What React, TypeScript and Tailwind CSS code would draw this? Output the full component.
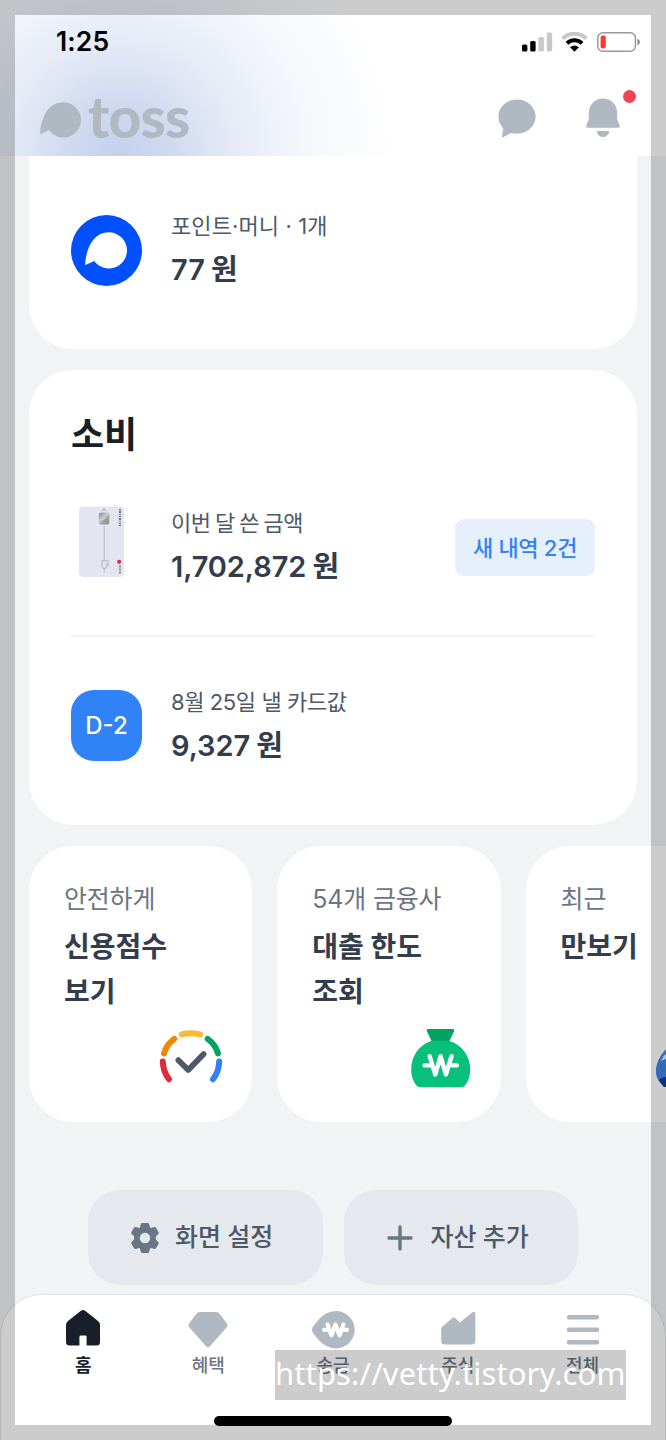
import type { ReactNode } from "react"

const TossMark = ({ className }: { className?: string }) => (
  <svg viewBox="0 0 41 36" className={className} fill="currentColor">
    <path d="M23.3 0.2 A17.7 17.7 0 0 1 41 17.9 A17.7 17.7 0 0 1 9 28.300 L1 32 Q0 32.400 0.1 31.200 C1.5 14 9 0.2 23.3 0.2 Z" />
  </svg>
)

const SignalIcon = () => (
  <svg width="31" height="20" viewBox="0 0 31 20">
    <rect x="0" y="12.5" width="5.4" height="7" rx="1.5" fill="#000" />
    <rect x="8.2" y="9" width="5.4" height="10.5" rx="1.5" fill="#000" />
    <rect x="16.5" y="5" width="5.4" height="14.5" rx="1.5" fill="#c8c8c8" />
    <rect x="24.8" y="0.5" width="5.4" height="19" rx="1.5" fill="#c8c8c8" />
  </svg>
)

const WifiIcon = () => (
  <svg width="27" height="20" viewBox="0 0 27 20" fill="none">
    <path d="M1.6 6.6 A17 17 0 0 1 25.4 6.6" stroke="#c8c8c8" strokeWidth="4" />
    <path d="M6 11.4 A10.8 10.8 0 0 1 21 11.4" stroke="#000" strokeWidth="4" />
    <path d="M9 15.3 Q13.5 11.6 18 15.3 L13.5 19.8 Z" fill="#000" />
  </svg>
)

const BatteryIcon = () => (
  <svg width="44" height="20" viewBox="0 0 44 20">
    <rect x="0.8" y="0.8" width="37.6" height="18.4" rx="5" fill="none" stroke="#9a9a9a" strokeWidth="1.5" />
    <rect x="3.6" y="3.5" width="5.2" height="13" rx="2" fill="#fb3b30" />
    <path d="M40.4 6.8 Q43 7.8 43 10 Q43 12.2 40.4 13.2 Z" fill="#8f8f8f" />
  </svg>
)

const ChatIcon = () => (
  <svg width="38" height="39" viewBox="0 0 38 39" fill="#b0b8c1">
    <path d="M19 0.6 C29.3 0.6 37.6 8.3 37.6 17.6 C37.6 27 29.5 34.7 19 34.7 C17 34.7 15.2 34.3 13.4 33.9 L5 38.2 Q3.8 38.7 4 37.5 L5.3 29.4 C2.2 26.4 0.4 22.3 0.4 17.6 C0.4 8.3 8.7 0.6 19 0.6 Z" />
  </svg>
)

const BellIcon = () => (
  <svg width="34" height="40" viewBox="0 0 34 40" fill="#b0b8c1">
    <path d="M17 0.6 C25.2 0.6 31.2 6.8 31.2 15 V21.5 L33.7 27.4 Q34.3 29.8 32 29.8 H2 Q-0.3 29.8 0.3 27.4 L2.8 21.5 V15 C2.8 6.8 8.8 0.6 17 0.6 Z" />
    <path d="M11.8 33 H22.2 Q23.6 33 23.2 34.2 C22.2 37.2 20 39 17 39 C14 39 11.8 37.2 10.8 34.2 Q10.4 33 11.8 33 Z" />
  </svg>
)

const PlasticCard = () => (
  <svg width="71" height="71" viewBox="0 0 71 71">
    <defs>
      <linearGradient id="chip" x1="0" y1="0" x2="1" y2="1">
        <stop offset="0" stopColor="#8d8d8d" />
        <stop offset="0.45" stopColor="#c9c9c9" />
        <stop offset="0.55" stopColor="#a5a5a5" />
        <stop offset="1" stopColor="#8a8a8a" />
      </linearGradient>
    </defs>
    <rect x="8" y="0.5" width="45" height="70.5" rx="4.5" fill="#e5e5f1" />
    <path d="M31.3 4.6 L33 3.2 L34.7 4.6" fill="none" stroke="#777" strokeWidth="0.8" />
    <rect x="27.8" y="6.5" width="10.5" height="12" rx="2.2" fill="url(#chip)" />
    <path d="M28.5 14 L33.5 12.5 L38 8.5" fill="none" stroke="#e0e0e0" strokeWidth="0.8" />
    <path d="M33.2 20 V54.5 M33.2 62.5 V67" stroke="#b9b9c4" strokeWidth="1" />
    <path d="M31 54.8 H37 V60 L35 60.5 L34.5 62.5 H32.3 L31 60.5 Z M34.3 58 L37 59.5" fill="none" stroke="#b2b2bf" strokeWidth="1" />
    <path d="M49 3 V20" stroke="#77757f" strokeWidth="2.2" strokeDasharray="1.2 0.9 2.2 0.7 0.8 1" />
    <circle cx="48.2" cy="55.8" r="2.1" fill="#d92c50" />
    <path d="M49 59.5 V67.5" stroke="#8a8590" strokeWidth="1.9" strokeDasharray="1.4 0.6 0.9 0.5" />
  </svg>
)

const GaugeIcon = () => (
  <svg width="64" height="64" viewBox="0 0 64 64" fill="none" strokeWidth="6" strokeLinecap="round">
    <path d="M3.8 34.6 Q4.2 45 10 52.2" stroke="#de2a3c" />
    <path d="M5 26.4 Q7.4 17.600 15.3 11.800" stroke="#f18600" />
    <path d="M22.8 7.400 Q32 5 41 7.400" stroke="#f8bb36" />
    <path d="M48.7 11.800 Q56.6 17.600 59 26.400" stroke="#03a45f" />
    <path d="M60.2 34.600 Q59.8 45 54 52.200" stroke="#3182f6" />
    <path d="M19.4 33.2 L29.2 42.9 L44.5 27.2" stroke="#4e5968" strokeWidth="5.8" strokeLinejoin="round" />
  </svg>
)

const MoneyBagIcon = () => (
  <svg width="64" height="64" viewBox="0 0 64 64">
    <path d="M20.5 2 H44.4 Q47 2 45.9 4.4 L41 15 H24 L19 4.4 Q17.8 2 20.5 2 Z" fill="#02a262" />
    <path d="M24 13.8 H41 C54 17.5 62.2 29 62.2 42.5 C62.2 49 60.3 54.7 57 58.5 Q55.5 60.3 53 60.3 H12.4 Q9.9 60.3 8.4 58.5 C5.1 54.7 3.2 49 3.2 42.5 C3.2 29 11 17.5 24 13.8 Z" fill="#06c07c" />
    <path d="M21.6 29.2 L27.3 47.5 L32.6 29.2 L37.9 47.5 L43.6 29.2 M16.6 38.4 H23 M42.5 38.4 H48.8" fill="none" stroke="#fff" strokeWidth="4.4" strokeLinecap="round" strokeLinejoin="round" />
  </svg>
)

const WalkIcon = () => (
  <svg width="64" height="64" viewBox="0 0 64 64">
    <path d="M8 60 C2 54 -1 49 0 42 C1 35 4 28 12 20 H60 V60 Z" fill="#3f86e8" />
    <path d="M5 34 L14 30 V24.500 L8 28.500 Z" fill="#e6f0fd" />
    <path d="M2.500 53 Q7 50 15 48.500 V60 H8 Z" fill="#123f96" />
  </svg>
)

const GearIcon = () => (
  <svg width="30" height="32" viewBox="0 0 30 32">
    <path
      d="M12.3 1 H17.7 Q18.8 1 19.1 2.1 L20 5.4 L21 6 L24.3 5.1 Q25.4 4.8 26 5.8 L28.6 10.3 Q29.1 11.3 28.3 12.1 L25.9 14.5 V17.5 L28.3 19.9 Q29.1 20.7 28.6 21.7 L26 26.2 Q25.4 27.2 24.3 26.9 L21 26 L20 26.6 L19.1 29.9 Q18.8 31 17.7 31 H12.3 Q11.2 31 10.9 29.9 L10 26.6 L9 26 L5.7 26.9 Q4.6 27.2 4 26.2 L1.4 21.7 Q0.9 20.7 1.7 19.9 L4.1 17.5 V14.5 L1.7 12.1 Q0.9 11.3 1.4 10.3 L4 5.8 Q4.6 4.8 5.7 5.1 L9 6 L10 5.4 L10.9 2.1 Q11.2 1 12.3 1 Z"
      fill="#6b7684"
    />
    <circle cx="15" cy="16" r="5.2" fill="#e5e8ed" />
  </svg>
)

const PlusIcon = () => (
  <svg width="26" height="26" viewBox="0 0 26 26" stroke="#6b7684" strokeWidth="3.4" strokeLinecap="round">
    <path d="M13 2 V24 M2 13 H24" />
  </svg>
)

const navItems: { label: string; active?: boolean; icon: ReactNode }[] = [
  {
    label: "홈",
    active: true,
    icon: <path d="M20.2 2.6 Q22 1.2 23.8 2.6 L37 13 Q39 14.6 39 17 V34 Q39 37.5 35.5 37.5 H25.6 V29 Q25.6 27.6 24.2 27.6 H19.8 Q18.4 27.6 18.4 29 V37.5 H8.5 Q5 37.5 5 34 V17 Q5 14.6 7 13 Z" fill="#191f28" />,
  },
  {
    label: "혜택",
    icon: <path d="M14 4 H30 Q32.4 4 33.8 6 L41 15.6 Q42.2 17.4 40.8 19.2 L24 38.2 Q22 40.4 20 38.2 L3.2 19.2 Q1.8 17.4 3 15.6 L10.2 6 Q11.6 4 14 4 Z" fill="#b0b8c1" />,
  },
  {
    label: "송금",
    icon: (
      <>
        <path d="M25 3 A18.7 18.7 0 1 1 25 40.4 C14 40.4 7 32 1.5 24 Q0.2 21.7 1.5 19.4 C7 11.5 14 3 25 3 Z" fill="#b0b8c1" />
        <path d="M16.5 16.4 L20.4 27.4 L24.5 16.6 L28.6 27.4 L32.5 16.4 M13 21.8 H17 M32 21.8 H36" fill="none" stroke="#fff" strokeWidth="4.2" strokeLinecap="round" strokeLinejoin="round" />
      </>
    ),
  },
  {
    label: "주식",
    icon: <path d="M6 19 L16 10.3 Q17.7 8.8 19.4 10.3 L24 14.6 L36.2 4.4 Q39.3 2.4 39.3 5.8 V33 Q39.3 36.6 35.8 36.6 H8.7 Q5.2 36.6 5.2 33 V21 Q5.2 19.7 6 19 Z" fill="#b0b8c1" />,
  },
  {
    label: "전체",
    icon: <path d="M8 9.2 H36 M8 21.7 H36 M8 34.2 H36" stroke="#b0b8c1" strokeWidth="4.5" strokeLinecap="round" />,
  },
]

const quickCards = [
  { caption: "안전하게", lines: ["신용점수", "보기"], icon: <GaugeIcon /> },
  { caption: "54개 금융사", lines: ["대출 한도", "조회"], icon: <MoneyBagIcon /> },
  { caption: "최근", lines: ["만보기"], icon: <WalkIcon /> },
]

function Header() {
  return (
    <header className="h-[156px] w-full bg-[radial-gradient(circle_250px_at_120px_155px,#c5d1ed_0%,#cfd9ef_20%,#e5eaf6_45%,#f5f7fb_75%,#ffffff_110%)] pt-[27px]">
      <div className="flex h-[29px] items-center justify-between pl-[56px] pr-[25px]">
        <span className="text-[26.5px] font-semibold tracking-[0.1px] text-black">1:25</span>
        <div className="flex items-center">
          <SignalIcon />
          <div className="ml-[8px]"><WifiIcon /></div>
          <div className="ml-[9px]"><BatteryIcon /></div>
        </div>
      </div>
      <div className="flex h-[124px] items-center justify-between pl-[40px] pr-[46px]">
        <div className="flex items-center pt-[4px] text-[#b0b8c1]">
          <TossMark className="h-[36px] w-[41px]" />
          <span className="ml-[7px] -mt-[8px] font-[Lato] text-[57px] leading-[60px] font-black tracking-[-0.8px]">toss</span>
        </div>
        <div className="flex items-center">
          <ChatIcon />
          <div className="relative ml-[50px]">
            <BellIcon />
            <span className="absolute -top-[8px] left-[37px] size-[13px] rounded-full bg-[#f04452]" />
          </div>
        </div>
      </div>
    </header>
  )
}

function Amount({ caption, value, className = "tracking-[-0.4px]" }: { caption: string; value: string; className?: string }) {
  return (
    <div className="ml-[29px] leading-[44px] whitespace-nowrap">
      <p className={`text-[22px] text-[#4e5968] ${className}`}>{caption}</p>
      <p className="text-[29px] font-semibold tracking-[-0.1px] text-[#333d4b] [word-spacing:-1px]">{value}</p>
    </div>
  )
}

function BottomNav() {
  return (
    <nav className="absolute inset-x-0 bottom-0 h-[146px] rounded-t-[42px] border border-b-0 border-[#e0e3e8] bg-white px-[20px] pt-[13px]">
      <div className="grid grid-cols-5">
        {navItems.map((item) => (
          <div key={item.label} className="flex flex-col items-center">
            <svg width="44" height="44" viewBox="0 0 44 44">{item.icon}</svg>
            <span className={item.active ? "mt-[1px] text-[18px] leading-[26px] font-bold text-[#191f28]" : "mt-[1px] text-[18px] leading-[26px] font-medium text-[#6b7684]"}>
              {item.label}
            </span>
          </div>
        ))}
      </div>
    </nav>
  )
}

export default function App() {
  return (
    <div className="relative h-[1440px] w-[666px] overflow-hidden bg-[#f1f3f5] font-[Inter,'Noto_Sans_CJK_KR',sans-serif]">
      <Header />

      <main className="pl-[29px]">
        <section className="flex h-[193px] w-[608px] rounded-b-[44px] bg-white pt-[48px] pl-[42px]">
          <div className="mt-[11px] flex size-[71px] items-center justify-center rounded-full bg-[#0050ff] text-white">
            <TossMark className="mr-[2px] h-[37px] w-[42px]" />
          </div>
          <Amount caption="포인트·머니 · 1개" value="77 원" className="tracking-[0.1px]" />
        </section>

        <section className="mt-[21px] h-[455px] w-[608px] rounded-[44px] bg-white px-[42px] pt-[37px]">
          <h2 className="text-[36px] leading-[56px] font-bold text-[#191f28]">소비</h2>
          <div className="mt-[38px] flex h-[136px] border-b-2 border-[#f1f3f5]">
            <div className="mt-[5px]"><PlasticCard /></div>
            <Amount caption="이번 달 쓴 금액" value="1,702,872 원" className="tracking-[-0.5px] [word-spacing:-1.2px]" />
            <button className="mt-[18px] ml-auto h-[57px] w-[140px] rounded-[9px] bg-[#e6f0fd] pt-[1px] text-[22px] font-medium tracking-[-0.3px] whitespace-nowrap text-[#3182f6]">
              새 내역 2건
            </button>
          </div>
          <div className="flex pt-[43px]">
            <div className="mt-[10px] flex size-[71px] items-center justify-center rounded-[23px] bg-[#3182f6] text-[24px] font-medium text-white">
              D-2
            </div>
            <Amount caption="8월 25일 낼 카드값" value="9,327 원" />
          </div>
        </section>

        <div className="mt-[21px] flex gap-[25px]">
          {quickCards.map((card) => (
            <section key={card.caption} className="flex h-[276px] w-[223.3px] shrink-0 flex-col rounded-[44px] bg-white pt-[31px] pl-[35px] leading-[45px] whitespace-nowrap">
              <p className="text-[25px] tracking-[-0.2px] text-[#6b7684]">{card.caption}</p>
              <div className="mt-[3px] h-[90px] text-[28px] font-bold text-[#333d4b]">
                {card.lines.map((line) => <p key={line}>{line}</p>)}
              </div>
              <div className="mt-[12px] mr-[29px] self-end">{card.icon}</div>
            </section>
          ))}
        </div>
      </main>

      <div className="mt-[68px] flex justify-center gap-[21px] text-[25px] font-medium tracking-[-0.1px] text-[#4e5968]">
        <button className="flex h-[95px] w-[234.5px] items-center rounded-[32px] bg-[#e5e8ed] pl-[42px]">
          <GearIcon />
          <span className="ml-[15px]">화면 설정</span>
        </button>
        <button className="flex h-[95px] w-[234.5px] items-center rounded-[32px] bg-[#e5e8ed] pl-[43px]">
          <PlusIcon />
          <span className="ml-[18px]">자산 추가</span>
        </button>
      </div>

      <BottomNav />

      {/* shaded frame and watermark over the screen */}
      <div className="absolute inset-0 border-[15px] border-black/20" />
      <div className="absolute top-[1350px] left-[275px] h-[50px] w-[351px] bg-black/20 font-['Noto_Sans'] text-[31px] leading-[46px] tracking-[0.12px] whitespace-nowrap text-white">
        https://vetty.tistory.com
      </div>
      <div className="absolute top-[1416px] left-[214px] h-[10px] w-[238px] rounded-full bg-black" />
    </div>
  )
}
